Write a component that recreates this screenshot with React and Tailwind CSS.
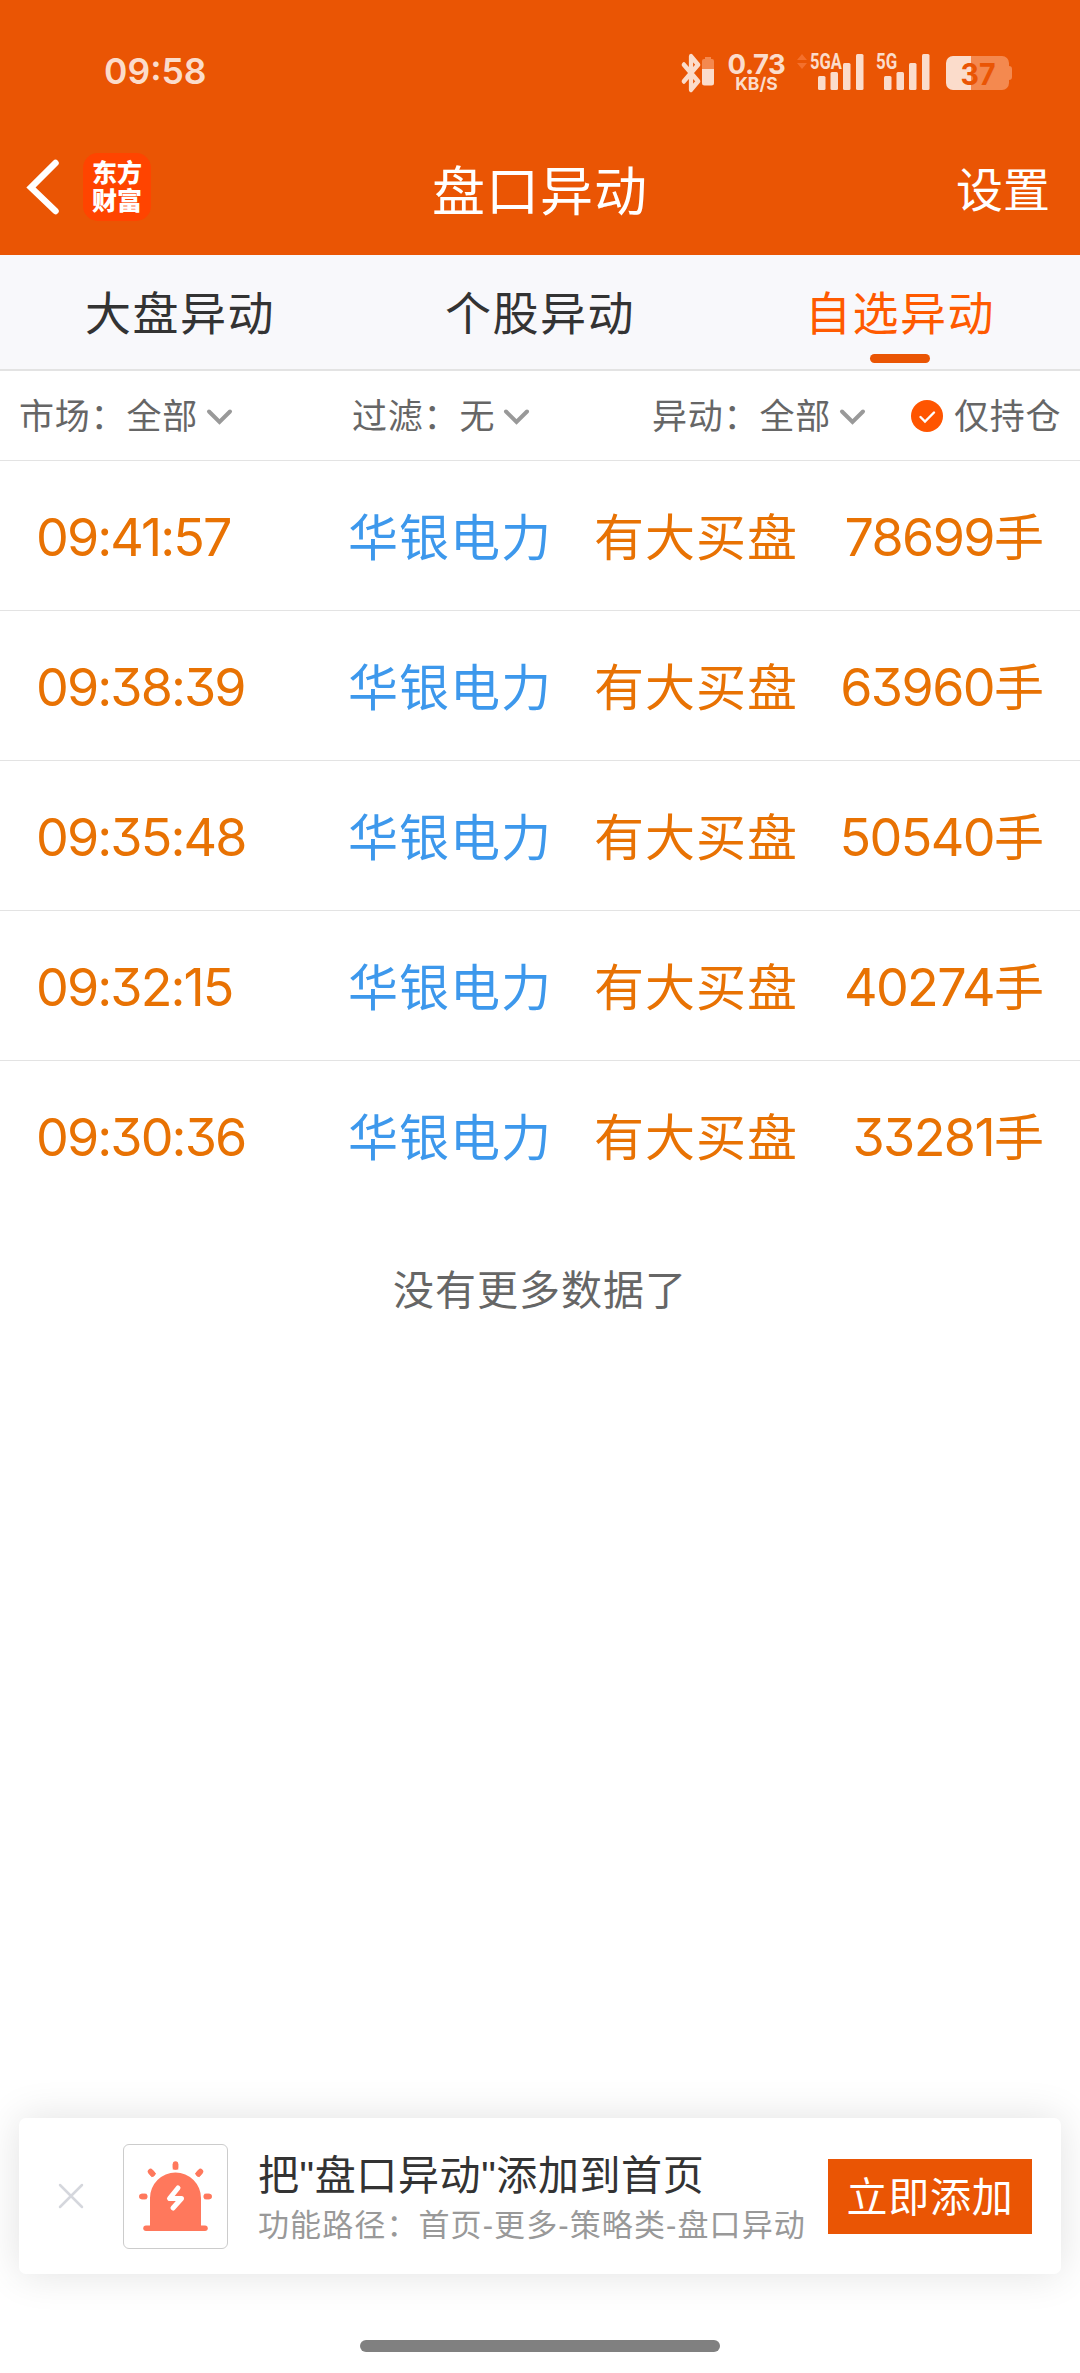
import { Bluetooth } from "lucide-react";

const tabs = ["大盘异动", "个股异动", "自选异动"];

const rows = [
  { time: "09:41:57", name: "华银电力", type: "有大买盘", amount: "78699" },
  { time: "09:38:39", name: "华银电力", type: "有大买盘", amount: "63960" },
  { time: "09:35:48", name: "华银电力", type: "有大买盘", amount: "50540" },
  { time: "09:32:15", name: "华银电力", type: "有大买盘", amount: "40274" },
  { time: "09:30:36", name: "华银电力", type: "有大买盘", amount: "33281" },
];

function Signal({ label, className }) {
  return (
    <svg className={`overflow-visible ${className}`} width="54" height="38" viewBox="0 0 54 38" fill="#fbdccb">
      <text x="0" y="17" fontSize="22" fontWeight="700" fontFamily="Roboto, sans-serif" textLength={label.length * 10.6} lengthAdjust="spacingAndGlyphs">
        {label}
      </text>
      <rect x="8" y="24" width="7.5" height="14" rx="1.5" />
      <rect x="20.5" y="20" width="7.5" height="18" rx="1.5" />
      <rect x="33" y="11" width="7.5" height="27" rx="1.5" />
      <rect x="46" y="2" width="7.5" height="36" rx="1.5" />
    </svg>
  );
}

function StatusBar() {
  return (
    <div className="flex h-[94px] items-end pr-[67px] pl-[104px] text-[#fbdccb]">
      <span className="mb-0.5 text-[35.5px] leading-[40px] font-semibold">09:58</span>
      <div className="ml-auto flex h-[40px] items-start">
        <Bluetooth className="-mt-px -mr-1.5 h-[40px] w-[34px]" strokeWidth={3} preserveAspectRatio="none" />
        <svg className="mt-[3px] mr-[15px]" width="12" height="29" viewBox="0 0 12 29">
          <path d="M3 0h6v2h1a2 2 0 0 1 2 2v9H0V4a2 2 0 0 1 2-2h1z" fill="#f4894f" />
          <path d="M0 12h12v14a2.5 2.5 0 0 1-2.5 2.5h-7A2.5 2.5 0 0 1 0 26z" fill="#fbdccb" />
        </svg>
        <div className="flex w-[55px] flex-col items-center font-bold">
          <span className="text-[27.5px] leading-[20px] tracking-[-0.4px]">0.73</span>
          <span className="mt-[2px] text-[17.5px] leading-[16px]">KB/S</span>
        </div>
        <svg className="mr-[3px] ml-[13px]" width="10" height="15" viewBox="0 0 10 15" fill="#f4702c">
          <path d="M5 0l5 6H0zM5 15l5-6H0z" />
        </svg>
        <Signal label="5GA" className="-mt-0.5" />
        <Signal label="5G" className="-mt-0.5 ml-[12px]" />
        <svg className="mt-[2px] ml-[16px] overflow-visible" width="67" height="34" viewBox="0 0 67 34">
          <path d="M25 0h31a7 7 0 0 1 7 7v3a3 3 0 0 1 3 3v8a3 3 0 0 1-3 3v3a7 7 0 0 1-7 7H25z" fill="#f4894f" />
          <path d="M25 0H7a7 7 0 0 0-7 7v20a7 7 0 0 0 7 7h18z" fill="#fbdccb" />
          <text x="32" y="28.5" textAnchor="middle" fontSize="30" fontWeight="700" fontFamily="Inter, sans-serif" fill="#ea5504" textLength="35" lengthAdjust="spacingAndGlyphs">
            37
          </text>
        </svg>
      </div>
    </div>
  );
}

function Header() {
  return (
    <header className="h-[255px] bg-[#ea5504] text-white">
      <StatusBar />
      <div className="grid grid-cols-3 items-start px-[26px] pt-[59px]">
        <div className="flex items-center">
          <svg width="34" height="56" viewBox="0 0 34 56" fill="none" stroke="#fff" strokeWidth="6.5" strokeLinecap="round">
            <path d="M29.5 4L5 28.5L29.5 52" />
          </svg>
          <div className="ml-[23px] flex size-[68px] flex-col items-center justify-center rounded-[15px] bg-[#ff4400] text-[25px] leading-[28px] font-black">
            <span>东方</span>
            <span>财富</span>
          </div>
        </div>
        <h1 className="pt-[2px] text-center text-[53px] leading-[74px] tracking-[1px]">盘口异动</h1>
        <span className="pt-[2px] pr-[4px] text-right text-[47px] leading-[70px]">设置</span>
      </div>
    </header>
  );
}

function Chevron() {
  return (
    <svg className="mt-px ml-[8px]" width="27" height="17" viewBox="0 0 27 17" fill="none" stroke="#999" strokeWidth="4" strokeLinecap="round">
      <path d="M3 3.5L13.5 14L24 3.5" />
    </svg>
  );
}

function Filter({ label, value, className }) {
  return (
    <div className={`flex items-center ${className}`}>
      <span className="pt-[2px]">
        {label}：{value}
      </span>
      <Chevron />
    </div>
  );
}

function Filters() {
  return (
    <div className="flex h-[90px] items-center border-b border-[#e3e3e3] pl-[19px] text-[35px] tracking-[0.8px] text-[#666]">
      <Filter label="市场" value="全部" className="w-[333px]" />
      <Filter label="过滤" value="无" className="w-[300px]" />
      <Filter label="异动" value="全部" className="w-[259px]" />
      <svg className="mr-[11px]" width="32" height="32" viewBox="0 0 32 32" fill="none">
        <circle cx="16" cy="16" r="16" fill="#ff5500" />
        <path d="M9.5 17l4.5 4.5L23 12.5" stroke="#fff" strokeWidth="2.4" strokeLinecap="round" />
      </svg>
      <span className="pt-[2px]">仅持仓</span>
    </div>
  );
}

function Row({ row }) {
  return (
    <li className="flex h-[150px] items-center border-b border-[#e3e3e3] px-[36px] pt-[5px] text-[50px] text-[#e87203] last:border-b-transparent">
      <span className="w-[312px] text-[52px] tracking-[-1.9px]">{row.time}</span>
      <span className="w-[246px] tracking-[1px] text-[#3d98ec]">{row.name}</span>
      <span className="tracking-[1px]">{row.type}</span>
      <span className="ml-auto">
        <span className="text-[52px] tracking-[-1.6px]">{row.amount}</span>手
      </span>
    </li>
  );
}

function AddCard() {
  return (
    <div className="mx-[19px] flex h-[156px] items-center rounded-[7px] bg-white pr-[29px] pl-[39px] shadow-[0_0_40px_rgba(0,0,0,0.12)]">
      <svg width="26" height="26" viewBox="0 0 26 26" stroke="#d5d7dd" strokeWidth="2.5" strokeLinecap="round">
        <path d="M2 2l22 22M24 2L2 24" />
      </svg>
      <div className="ml-[39px] flex size-[105px] shrink-0 items-center justify-center rounded-[6px] border border-[#ccc]">
        <svg width="73" height="70" viewBox="0 0 73 70" fill="none">
          <path d="M11 66V37a25.5 25.5 0 0 1 51 0v29z" fill="#ff785c" />
          <path d="M7 67.2h59" stroke="#ff785c" strokeWidth="5.5" strokeLinecap="round" />
          <path d="M36.5 3v5.5M11.5 10.5l3.5 4M61.5 10.5l-3.5 4M2.5 35.5h5M70.5 35.5h-5" stroke="#ff785c" strokeWidth="5.5" />
          <path d="M36.5 3v3M11.5 10.5l2 2.3M61.5 10.5l-2 2.3M2.8 35.5h3M70.2 35.5h-3" stroke="#ff785c" strokeWidth="5.5" strokeLinecap="round" />
          <path d="M39 27l-8.5 10.5h12L34 47" stroke="#fff" strokeWidth="5" strokeLinecap="round" strokeLinejoin="round" />
        </svg>
      </div>
      <div className="ml-[30px] pt-[8px] font-['Liberation_Sans','Noto_Sans_CJK_SC',sans-serif] whitespace-nowrap">
        <p className="text-[41px] leading-[52px] tracking-[0.6px] text-[#333]">把"盘口异动"添加到首页</p>
        <p className="text-[31px] leading-[48px] tracking-[1.1px] text-[#999]">功能路径：首页-更多-策略类-盘口异动</p>
      </div>
      <button className="ml-auto h-[75px] w-[204px] shrink-0 bg-[#ea5504] pt-[3px] text-[41px] tracking-[0.8px] text-white">立即添加</button>
    </div>
  );
}

function App() {
  return (
    <div className="flex h-[2373px] w-[1080px] flex-col overflow-hidden bg-white font-[Inter,'Noto_Sans_CJK_SC',sans-serif]">
      <Header />
      <nav className="grid h-[116px] grid-cols-3 border-b-2 border-[#e3e3e3] bg-[#f8f8fb] text-[46px] tracking-[1.5px] text-[#333]">
        {tabs.map((tab) => (
          <div key={tab} className={tab === "自选异动" ? "flex flex-col items-center text-[#ff5a00]" : "flex flex-col items-center"}>
            <span className="mt-[23px] h-[76px] leading-[70px]">{tab}</span>
            {tab === "自选异动" && <span className="h-[9px] w-[60px] rounded-full bg-[#ea5504]" />}
          </div>
        ))}
      </nav>
      <Filters />
      <ul className="[font-feature-settings:'cv09']">
        {rows.map((row) => (
          <Row key={row.time} row={row} />
        ))}
      </ul>
      <p className="mt-[49px] text-center text-[41px] leading-[60px] tracking-[1px] text-[#666]">没有更多数据了</p>
      <div className="mt-auto">
        <AddCard />
        <div className="mx-auto mt-[66px] mb-[21px] h-[12px] w-[360px] rounded-full bg-[#808080]" />
      </div>
    </div>
  );
}

export default App;
